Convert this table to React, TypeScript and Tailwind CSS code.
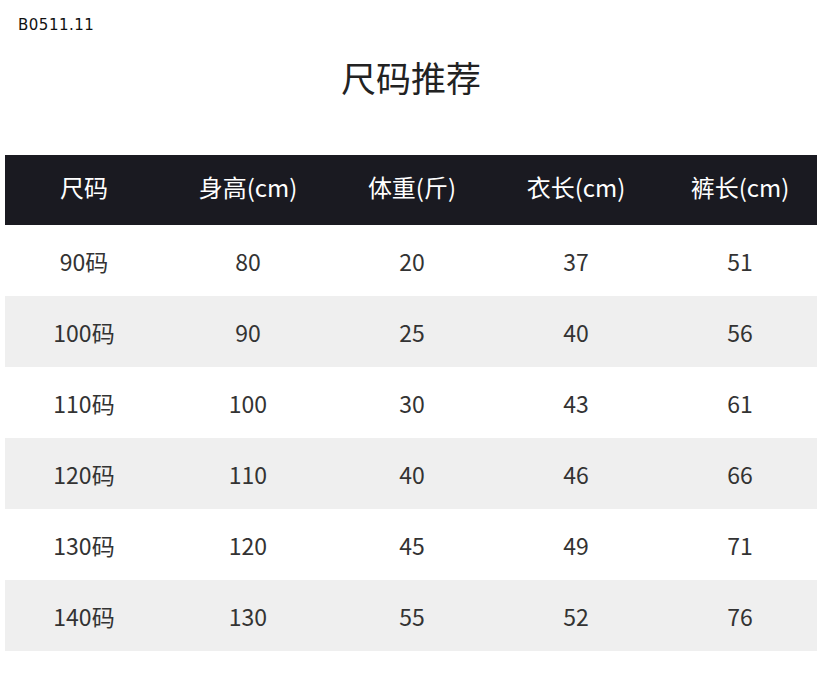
import React from "react";

const headers = ["尺码", "身高(cm)", "体重(斤)", "衣长(cm)", "裤长(cm)"];
const rows = [
  ["90码", "80", "20", "37", "51"],
  ["100码", "90", "25", "40", "56"],
  ["110码", "100", "30", "43", "61"],
  ["120码", "110", "40", "46", "66"],
  ["130码", "120", "45", "49", "71"],
  ["140码", "130", "55", "52", "76"],
];

export default function App() {
  return (
    <div
      className="w-[822px] h-[688px] bg-white flex flex-col"
      style={{ fontFamily: '"Noto Sans CJK SC", "Noto Sans", sans-serif' }}
    >
      <div className="h-[52px] pl-[18px] pt-[15px]">
        <span
          className="text-[15px] leading-[20px] text-[#111] block tracking-[0.5px]"
          style={{ fontFamily: '"DejaVu Sans", sans-serif' }}
        >
          B0511.11
        </span>
      </div>
      <div className="h-[103px] flex justify-center">
        <h1 className="text-[35px] leading-[50px] text-[#222] font-normal">尺码推荐</h1>
      </div>
      <div className="mx-[5px] w-[812px] flex flex-col">
        <div className="h-[70px] bg-[#1a1a21] pb-[6px] flex items-center">
          <div className="ml-[-3px] grid grid-cols-[164px_164px_164px_164px_164px]">
            {headers.map((h) => (
              <div key={h} className="text-center text-white text-[24px] leading-none">
                {h}
              </div>
            ))}
          </div>
        </div>
        {rows.map((r, i) => (
          <div
            key={i}
            className={`h-[71px] flex items-center ${i % 2 === 1 ? "bg-[#efefef]" : "bg-white"}`}
          >
            <div className="ml-[-3px] pt-[2px] grid grid-cols-[164px_164px_164px_164px_164px]">
              {r.map((c, j) => (
                <div key={j} className="text-center text-[#333] text-[23px] leading-none">
                  {c}
                </div>
              ))}
            </div>
          </div>
        ))}
      </div>
    </div>
  );
}
